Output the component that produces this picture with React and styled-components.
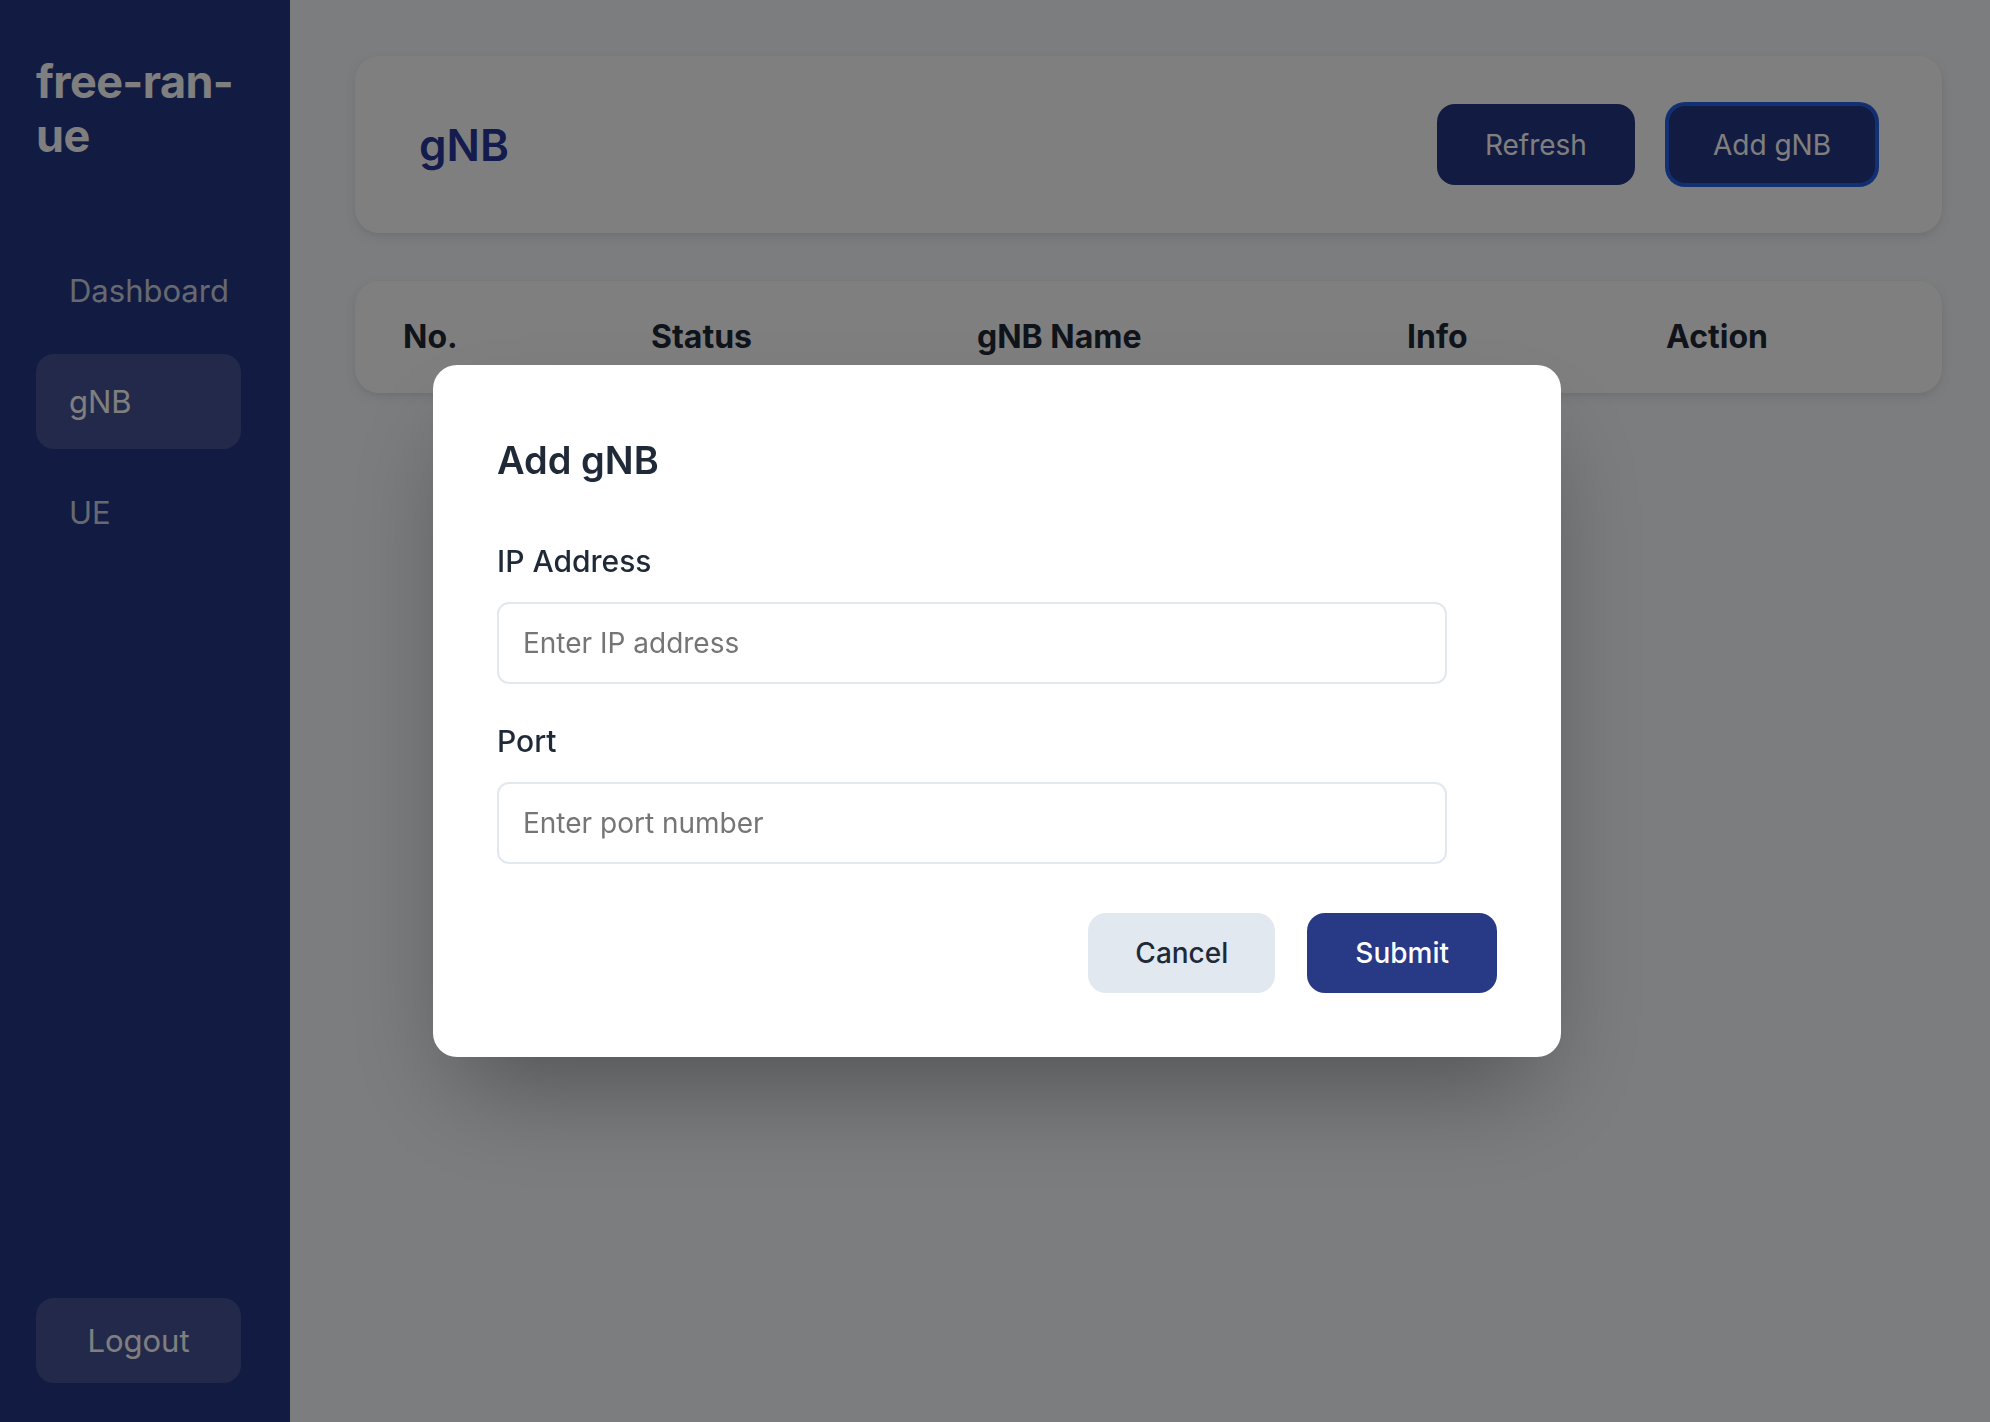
import React from "react";
import styled, { createGlobalStyle } from "styled-components";

const primary = "#253682";

const GlobalStyle = createGlobalStyle`
   * { box-sizing: border-box; }
   html, body {
      margin: 0;
      padding: 0;
      font-family: Inter, "Noto Sans", "Liberation Sans", sans-serif;
      color: #1f2937;
   }
`

const Layout = styled.div`
   display: flex;
   width: 100vw;
   height: 100vh;
   overflow: hidden;
`

const Sidebar = styled.aside`
   width: 290px;
   flex-shrink: 0;
   display: flex;
   flex-direction: column;
   padding: 55px 49px 39px 36px;
   background-color: ${primary};
`

const Brand = styled.h1`
   margin: 0 -30px 80px 0;
   font-size: 45px;
   line-height: 54px;
   font-weight: 700;
   letter-spacing: -0.6px;
   color: #ffffff;
`

const Nav = styled.nav`
   display: flex;
   flex-direction: column;
   gap: 16px;
`

const NavItem = styled.a`
   display: block;
   padding: 24px 33px;
   font-size: 31px;
   line-height: 47px;
   border-radius: 18px;
   color: ${props => props.$active ? "#ffffff" : "rgba(255, 255, 255, 0.78)"};
   background-color: ${props => props.$active ? "rgba(255, 255, 255, 0.15)" : "transparent"};
   text-decoration: none;
`

const LogoutButton = styled.button`
   margin-top: auto;
   width: 100%;
   padding: 19px 0;
   font-family: inherit;
   font-size: 31px;
   line-height: 47px;
   color: #ffffff;
   background-color: rgba(255, 255, 255, 0.15);
   border: none;
   border-radius: 18px;
`

const Main = styled.main`
   flex: 1;
   display: flex;
   flex-direction: column;
   gap: 48px;
   padding: 56px 48px 0 65px;
   background-color: #f8fafc;
`

const Card = styled.section`
   background-color: #ffffff;
   border-radius: 24px;
   box-shadow: 0 4px 12px rgba(0, 0, 0, 0.08), 0 2px 4px rgba(0, 0, 0, 0.04);
`

const HeaderCard = styled(Card)`
   display: flex;
   align-items: center;
   justify-content: space-between;
   padding: 48px 65px 48px 64px;
`

const PageTitle = styled.h2`
   margin: 0;
   font-size: 44px;
   font-weight: 600;
   color: #26399a;
`

const Actions = styled.div`
   display: flex;
   gap: 32px;
`

const PrimaryButton = styled.button`
   padding: 0 ${props => props.$padX || "48px"};
   height: ${props => props.$height || "81px"};
   font-family: inherit;
   font-size: 28px;
   font-weight: ${props => props.$weight || 400};
   color: #ffffff;
   background-color: ${props => props.$bg || primary};
   border: none;
   border-radius: 18px;
   box-shadow: ${props => props.$focused ? "0 0 0 2px #2563eb, inset 0 0 0 2px #2563eb" : "none"};
`

const TableCard = styled(Card)`
   padding: 32px 48px;
`

const HeadRow = styled.div`
   display: grid;
   grid-template-columns: 248px 326px 430px 259px 1fr;
   font-size: 32px;
   line-height: 48px;
   font-weight: 700;
   color: #1f2937;
`

const Overlay = styled.div`
   position: fixed;
   inset: 0;
   display: flex;
   align-items: center;
   justify-content: center;
   padding-left: 4px;
   background-color: rgba(0, 0, 0, 0.5);
`

const Modal = styled.div`
   width: 1128px;
   padding: 67px 64px 64px;
   background-color: #ffffff;
   border-radius: 24px;
   box-shadow: 0 50px 100px -24px rgba(0, 0, 0, 0.35);
`

const ModalTitle = styled.h3`
   margin: 0 0 49px;
   font-size: 38px;
   line-height: 56px;
   font-weight: 600;
   color: #1f2937;
`

const Field = styled.div`
   display: flex;
   flex-direction: column;
   margin-bottom: ${props => props.$last ? "49px" : "33px"};
`

const Label = styled.label`
   margin-bottom: 17px;
   font-size: 30px;
   line-height: 48px;
   font-weight: 500;
   color: #1f2937;
`

const Input = styled.input`
   width: 950px;
   height: 82px;
   padding: 0 24px;
   font-family: inherit;
   font-size: 28px;
   color: #1f2937;
   border: 2px solid #e2e8f0;
   border-radius: 12px;
   outline: none;
   &::placeholder {
      color: #757575;
   }
`

const Footer = styled.div`
   display: flex;
   justify-content: flex-end;
   gap: 32px;
`

const CancelButton = styled.button`
   height: 80px;
   padding: 0 47px;
   font-family: inherit;
   font-size: 28px;
   font-weight: 500;
   color: #1f2937;
   background-color: #e2e8f0;
   border: none;
   border-radius: 18px;
`

const columns = ["No.", "Status", "gNB Name", "Info", "Action"];

const App = () => {
   return (
      <>
         <GlobalStyle />
         <Layout>
            <Sidebar>
               <Brand>free-ran-ue</Brand>
               <Nav>
                  <NavItem>Dashboard</NavItem>
                  <NavItem $active>gNB</NavItem>
                  <NavItem>UE</NavItem>
               </Nav>
               <LogoutButton>Logout</LogoutButton>
            </Sidebar>
            <Main>
               <HeaderCard>
                  <PageTitle>gNB</PageTitle>
                  <Actions>
                     <PrimaryButton>Refresh</PrimaryButton>
                     <PrimaryButton $focused $padX="46px">Add gNB</PrimaryButton>
                  </Actions>
               </HeaderCard>
               <TableCard>
                  <HeadRow>
                     {columns.map(c => <div key={c}>{c}</div>)}
                  </HeadRow>
               </TableCard>
            </Main>
         </Layout>
         <Overlay>
            <Modal>
               <ModalTitle>Add gNB</ModalTitle>
               <Field>
                  <Label>IP Address</Label>
                  <Input placeholder="Enter IP address" />
               </Field>
               <Field $last>
                  <Label>Port</Label>
                  <Input placeholder="Enter port number" />
               </Field>
               <Footer>
                  <CancelButton>Cancel</CancelButton>
                  <PrimaryButton $height="80px" $weight={500} $bg="#283a86">Submit</PrimaryButton>
               </Footer>
            </Modal>
         </Overlay>
      </>
   )
}

export default App;
